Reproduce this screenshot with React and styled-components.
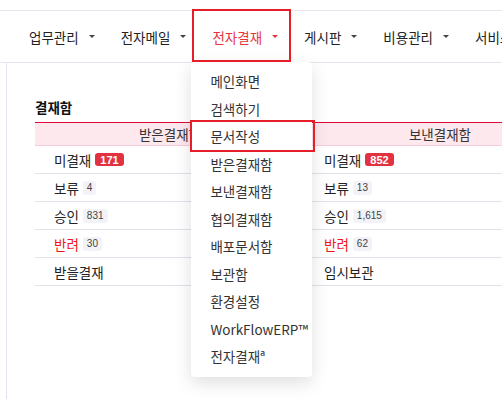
import React from 'react';
import styled, { createGlobalStyle } from 'styled-components';

const GlobalStyle = createGlobalStyle`
  html, body {
    margin: 0;
    padding: 0;
    overflow: hidden;
    background: #fff;
  }
  body {
    font-family: "Noto Sans CJK KR", "Noto Sans", sans-serif;
    color: #222;
  }
`;

const Page = styled.div`
  padding-top: 10px;
  width: 502px;
  height: 399px;
  box-sizing: border-box;
  overflow: hidden;
`;

const Nav = styled.nav`
  display: flex;
  height: 51px;
  padding-left: 16px;
  border-top: 1px solid #e7e6ef;
  border-bottom: 1px solid #e7e6ef;
  position: relative;
  z-index: 2;
`;

const NavItem = styled.div`
  position: relative;
  display: flex;
  align-items: center;
  flex-shrink: 0;
  padding: 0 13px;
  font-size: 13.5px;
  white-space: nowrap;
  color: ${({ active }) => (active ? '#e8343c' : '#222')};

  ${({ active }) =>
    active &&
    `
    &::after {
      content: '';
      position: absolute;
      top: -2px;
      bottom: 0;
      left: -7px;
      right: 0;
      border: 2.5px solid #e61e28;
      pointer-events: none;
    }
  `}
`;

const Caret = styled.span`
  display: inline-block;
  margin-left: 10px;
  width: 0;
  height: 0;
  border-left: 3px solid transparent;
  border-right: 3px solid transparent;
  border-top: 3px solid ${({ active }) => (active ? '#e8343c' : '#444')};
`;

const Menu = styled.ul`
  position: absolute;
  top: 100%;
  left: -8px;
  width: 121px;
  margin: 0;
  padding: 6px 0;
  list-style: none;
  background: #fff;
  border-radius: 4px;
  box-shadow: 0 6px 18px rgba(0, 0, 0, 0.13);
  color: #333;
`;

const MenuItem = styled.li`
  position: relative;
  height: 27.5px;
  line-height: 27.5px;
  padding-left: 19px;
  font-size: 13.5px;

  ${({ marked }) =>
    marked &&
    `
    &::after {
      content: '';
      position: absolute;
      top: -3px;
      bottom: -1px;
      left: -1px;
      right: -3px;
      border: 2.5px solid #e61e28;
    }
  `}
`;

const Main = styled.div`
  margin-left: 6px;
  border-left: 1px solid #e4e2ee;
  height: 336px;
  padding: 35px 0 0 28px;
  box-sizing: border-box;
`;

const Title = styled.h3`
  margin: 0 0 6px;
  font-size: 13.5px;
  line-height: 18px;
  font-weight: 700;
  color: #111;
`;

const Table = styled.div`
  display: grid;
  grid-template-columns: 270px 270px;
  width: 540px;
  border-top: 1px solid #e2073a;
`;

const Column = styled.div`
  display: flex;
  flex-direction: column;
`;

const Head = styled.div`
  height: 22px;
  line-height: 22px;
  text-align: center;
  background: #fde8ed;
  border-bottom: 1px solid #f6cdd6;
  font-size: 13.5px;
  color: #333;
`;

const Row = styled.div`
  display: flex;
  align-items: center;
  gap: 4px;
  height: 27px;
  padding-left: 19px;
  border-bottom: 1px solid #e3e2ec;
`;

const Label = styled.span`
  font-size: 13.5px;
  color: ${({ danger }) => (danger ? '#f01414' : '#222')};
`;

const Badge = styled.span`
  display: inline-flex;
  align-items: center;
  height: ${({ hot }) => (hot ? '13px' : '14px')};
  padding: 0 ${({ hot }) => (hot ? '5px' : '4px')};
  border-radius: 3px;
  font-family: "Liberation Sans", Arial, sans-serif;
  font-size: ${({ hot }) => (hot ? '11px' : '10px')};
  font-weight: ${({ hot }) => (hot ? 700 : 400)};
  background: ${({ hot }) => (hot ? '#e2323f' : '#f3f3f7')};
  color: ${({ hot }) => (hot ? '#fff' : '#444')};
`;

const navItems = ['업무관리', '전자메일', '전자결재', '게시판', '비용관리', '서비스관리'];

const menuItems = [
  '메인화면',
  '검색하기',
  '문서작성',
  '받은결재함',
  '보낸결재함',
  '협의결재함',
  '배포문서함',
  '보관함',
  '환경설정',
  'WorkFlowERP™',
  '전자결재ª',
];

const columns = [
  {
    title: '받은결재함',
    rows: [
      { label: '미결재', count: '171', hot: true },
      { label: '보류', count: '4' },
      { label: '승인', count: '831' },
      { label: '반려', count: '30', danger: true },
      { label: '받을결재' },
    ],
  },
  {
    title: '보낸결재함',
    rows: [
      { label: '미결재', count: '852', hot: true },
      { label: '보류', count: '13' },
      { label: '승인', count: '1,615' },
      { label: '반려', count: '62', danger: true },
      { label: '임시보관' },
    ],
  },
];

const App = () => {
  const current = '전자결재';

  return (
    <Page>
      <GlobalStyle />
      <Nav>
        {navItems.map((name) => (
          <NavItem key={name} active={name === current}>
            {name}
            <Caret active={name === current} />
            {name === current && (
              <Menu>
                {menuItems.map((item) => (
                  <MenuItem key={item} marked={item === '문서작성'}>
                    {item}
                  </MenuItem>
                ))}
              </Menu>
            )}
          </NavItem>
        ))}
      </Nav>
      <Main>
        <Title>결재함</Title>
        <Table>
          {columns.map((col) => (
            <Column key={col.title}>
              <Head>{col.title}</Head>
              {col.rows.map((row) => (
                <Row key={row.label}>
                  <Label danger={row.danger}>{row.label}</Label>
                  {row.count && <Badge hot={row.hot}>{row.count}</Badge>}
                </Row>
              ))}
            </Column>
          ))}
        </Table>
      </Main>
    </Page>
  );
};

export default App;
